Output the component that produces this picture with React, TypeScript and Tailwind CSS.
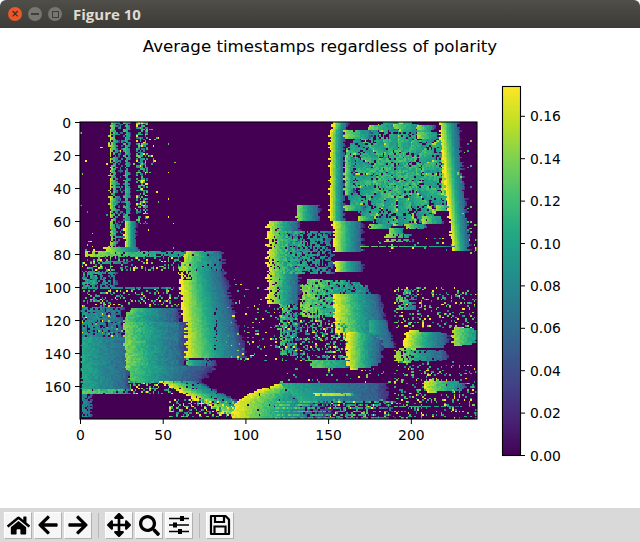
import React, { useMemo } from "react";
import { FaHome, FaArrowLeft, FaArrowRight, FaArrowsAlt, FaSearch } from "react-icons/fa";

const COLS = 240;
const ROWS = 180;

const VIRIDIS = [
  "#440154", "#482475", "#414487", "#355f8d", "#2a788e", "#21918c",
  "#22a884", "#44bf70", "#7ad151", "#bddf26", "#fde725",
];

const hex = (s: string) => [1, 3, 5].map((i) => parseInt(s.slice(i, i + 2), 16));

const viridis = (v: number) => {
  const t = Math.max(0, Math.min(0.9999, v)) * 10;
  const i = Math.floor(t);
  const a = hex(VIRIDIS[i]);
  const b = hex(VIRIDIS[i + 1]);
  const c = a.map((x, k) => Math.round(x + (b[k] - x) * (t - i)));
  return `rgb(${c[0]},${c[1]},${c[2]})`;
};

// small seeded generator so the picture is the same on every load
const makeRand = (seed: number) => () => {
  seed = (seed + 0x6d2b79f5) | 0;
  let t = Math.imul(seed ^ (seed >>> 15), 1 | seed);
  t = (t + Math.imul(t ^ (t >>> 7), 61 | t)) ^ t;
  return ((t ^ (t >>> 14)) >>> 0) / 4294967296;
};

type Band = {
  c0: number;
  c1: number;
  r0: number;
  r1: number;
  c0b?: number; // left edge at the last row
  c1b?: number; // right edge at the last row
  hi?: number;
  lo?: number;
  d?: number;
  n?: number;
  round?: boolean; // bulging ends instead of a square block
};

const buildFrame = () => {
  const rand = makeRand(1907);
  const grid = new Float32Array(COLS * ROWS);
  const put = (c: number, r: number, v: number) => {
    if (c >= 0 && c < COLS && r >= 0 && r < ROWS) grid[r * COLS + c] = v;
  };

  const band = ({ c0, c1, r0, r1, c0b = c0, c1b = c1, hi = 1, lo = 0.26, d = 1, n = 0.03, round = false }: Band) => {
    for (let r = r0; r < r1; r++) {
      const k = r1 - r0 > 1 ? (r - r0) / (r1 - r0 - 1) : 0;
      let l = c0 + (c0b - c0) * k;
      let e = c1 + (c1b - c1) * k;
      const span = e - l;
      if (round) {
        const q = Math.sqrt(Math.max(0, 1 - Math.pow(2 * k - 1, 4)));
        l += span * 0.08 * (1 - q);
        e = l + span * (0.25 + 0.75 * q);
      }
      const jl = (rand() - 0.5) * 1.4;
      const je = (rand() - 0.5) * 3;
      for (let c = Math.round(l + jl); c < Math.round(e + je); c++) {
        if (rand() > d) continue;
        const t = Math.min(1, Math.max(0, (c - l) / Math.max(1, span)));
        let v = lo + (hi - lo) * Math.pow(1 - t, 1.35);
        // the far edge fades out towards the background
        if (t > 0.86) v *= 0.45 + (0.55 * (1 - t)) / 0.14;
        put(c, r, v + (rand() - 0.5) * n * 2);
      }
    }
  };

  const speckle = (c0: number, c1: number, r0: number, r1: number, d: number, lo = 0.45, hi = 0.85, y = 0.18) => {
    for (let r = r0; r < r1; r++)
      for (let c = c0; c < c1; c++)
        if (rand() < d) put(c, r, rand() < y ? 1 : lo + rand() * (hi - lo));
  };

  const clear = (c0: number, c1: number, r0: number, r1: number, d: number) => {
    for (let r = r0; r < r1; r++)
      for (let c = c0; c < c1; c++) if (rand() < d) put(c, r, 0);
  };

  // left poles
  speckle(0, 60, 0, 78, 0.008, 0.45, 0.9, 0.4);
  band({ c0: 18, c1: 23, r0: 0, r1: 76, hi: 0.9, lo: 0.42, d: 0.8, n: 0.08 });
  speckle(23, 27, 0, 76, 0.22, 0.3, 0.55, 0.03);
  band({ c0: 27, c1: 30, r0: 0, r1: 60, hi: 0.68, lo: 0.5, d: 0.95, n: 0.05 });
  band({ c0: 27, c1: 34, r0: 60, r1: 78, hi: 1, lo: 0.28, n: 0.02 });
  speckle(34, 41, 0, 62, 0.55, 0.4, 0.8, 0.15);
  speckle(41, 48, 0, 60, 0.05, 0.45, 0.85, 0.4);

  // long bar that runs across the left half
  band({ c0: 3, c1: 70, r0: 78, r1: 82, hi: 0.88, lo: 0.5, d: 0.85, n: 0.06 });
  band({ c0: 15, c1: 36, r0: 76, r1: 79, hi: 0.95, lo: 0.4, n: 0.03 });
  speckle(1, 64, 82, 90, 0.28);
  band({ c0: 10, c1: 30, r0: 84, r1: 86, hi: 0.7, lo: 0.42, d: 0.9 });

  // middle slanted building
  band({ c0: 64, c1: 86, r0: 78, r1: 92, c0b: 60, c1b: 88, hi: 0.9, lo: 0.34, d: 0.94, n: 0.06 });
  band({ c0: 60, c1: 87, r0: 90, r1: 143, c0b: 63, c1b: 101, hi: 1, lo: 0.28, n: 0.03 });
  clear(60, 68, 90, 96, 0.5);
  band({ c0: 64, c1: 82, r0: 143, r1: 150, hi: 0.72, lo: 0.26, d: 0.96 });
  clear(81, 83, 112, 140, 0.3);
  clear(60, 102, 143, 144, 0.7);

  // left area, teal and blue
  band({ c0: 1, c1: 22, r0: 90, r1: 100, hi: 0.6, lo: 0.48, d: 0.62, n: 0.1 });
  speckle(1, 60, 100, 112, 0.2);
  band({ c0: 1, c1: 62, r0: 100, r1: 101, hi: 0.55, lo: 0.4, d: 0.7 });
  band({ c0: 1, c1: 26, r0: 112, r1: 130, hi: 0.52, lo: 0.38, d: 0.85, n: 0.08 });
  speckle(1, 26, 116, 130, 0.08);
  band({ c0: 1, c1: 30, r0: 130, r1: 162, hi: 0.6, lo: 0.34, d: 1, n: 0.05 });
  band({ c0: 1, c1: 30, r0: 162, r1: 165, hi: 0.75, lo: 0.62, d: 0.95, n: 0.08 });
  band({ c0: 1, c1: 7, r0: 165, r1: 179, hi: 0.5, lo: 0.3, d: 0.85, n: 0.06 });

  // the blob in the lower left
  band({ c0: 30, c1: 60, r0: 113, r1: 121, c0b: 26, hi: 0.76, lo: 0.3, n: 0.05 });
  band({ c0: 26, c1: 64, r0: 121, r1: 150, c0b: 28, hi: 0.82, lo: 0.32, n: 0.06 });
  band({ c0: 30, c1: 82, r0: 148, r1: 158, c1b: 74, hi: 0.74, lo: 0.22, n: 0.04 });
  speckle(30, 56, 157, 165, 0.34);

  // sweep down to the bottom
  for (let i = 0; i < 21; i++) {
    const c = 56 + i * 2;
    band({ c0: c - 8, c1: c + 16, r0: 157 + i, r1: 158 + i, hi: 1, lo: 0.4, d: 0.94, n: 0.05 });
  }
  speckle(54, 94, 168, 179, 0.3);
  speckle(88, 113, 95, 145, 0.035);
  speckle(100, 113, 120, 145, 0.07);

  // curved floor at the bottom
  for (let r = 159; r < 180; r++) {
    const k = (r - 159) / 20;
    const l = 92 + 25 * Math.pow(1 - k, 3);
    band({ c0: l, c1: 152, r0: r, r1: r + 1, hi: 1, lo: 0.26, d: 0.98, n: 0.04 });
  }

  // the tall block in the centre
  band({ c0: 113, c1: 133, r0: 60, r1: 110, hi: 1, lo: 0.3, d: 1, n: 0.05 });
  clear(113, 121, 64, 120, 0.14);
  band({ c0: 131, c1: 145, r0: 50, r1: 60, hi: 0.85, lo: 0.28 });
  band({ c0: 121, c1: 153, r0: 66, r1: 92, hi: 0.68, lo: 0.48, d: 0.72, n: 0.08 });
  clear(124, 153, 66, 88, 0.08);
  band({ c0: 121, c1: 132, r0: 110, r1: 142, hi: 0.7, lo: 0.48, d: 0.72, n: 0.1 });
  speckle(113, 132, 110, 145, 0.12);
  band({ c0: 153, c1: 171, r0: 60, r1: 79, hi: 1, lo: 0.28 });
  band({ c0: 154, c1: 171, r0: 84, r1: 91, hi: 1, lo: 0.28 });

  // tall pole on the left of the round pattern
  band({ c0: 153, c1: 162, r0: 0, r1: 8, c0b: 151, c1b: 160, hi: 1, lo: 0.28 });
  band({ c0: 151, c1: 160, r0: 8, r1: 60, hi: 1, lo: 0.28 });

  // round pattern, slightly wider than tall
  const cx = 191.5;
  const cy = 31;
  for (let r = 0; r < 67; r++) {
    for (let c = 160; c < 226; c++) {
      const dx = (c - cx) / 1.08;
      const dy = r - cy;
      const rad = Math.sqrt(dx * dx + dy * dy);
      if (rad > 32) continue;
      const a = ((Math.atan2(dy, dx) + Math.PI) / (2 * Math.PI)) * 16;
      const frac = a % 1;
      let v = 0;
      if (rad < 13) v = rand() < 0.94 ? 0.52 + rand() * 0.22 : 0;
      else if (rad < 15) v = rand() < 0.7 ? 0.55 + rand() * 0.25 : 0;
      else if (rad < 24) {
        v = frac < 0.08 && rand() < 0.6 ? (rand() < 0.5 ? 0.92 : 0) : 0.5 + 0.2 * (1 - frac) + (rand() - 0.5) * 0.12;
        if (rad > 22.5 && rand() < 0.25) v = 0;
      } else if (rad < 25.5) v = rand() < 0.6 ? 0.6 : 0;
      else {
        const edge = rand() < 0.6;
        v = frac < 0.1 && edge ? 0 : frac < 0.2 && edge ? 0.88 : 0.45 + 0.25 * (1 - frac) + (rand() - 0.5) * 0.1;
        if (rand() < 0.08) v = 0;
      }
      put(c, r, v);
    }
  }

  // petals round the pattern
  const petals = [
    [174, 190, 2, 5], [189, 205, 1, 4], [204, 214, 2, 5], [160, 176, 5, 10], [204, 217, 6, 10],
    [160, 172, 50, 54], [215, 226, 50, 54], [168, 178, 57, 60], [207, 219, 57, 62],
    [175, 189, 62, 65], [197, 209, 62, 65], [187, 196, 64, 68], [160, 165, 20, 44], [219, 224, 18, 44],
  ];
  petals.forEach(([c0, c1, r0, r1]) =>
    band({ c0, c1, r0, r1, hi: 0.86, lo: 0.46, d: 0.97, n: 0.05 }),
  );

  // pole on the right, it leans outwards
  band({ c0: 217, c1: 229, r0: 0, r1: 78, c0b: 225, c1b: 236, hi: 1, lo: 0.28, n: 0.02 });
  speckle(234, 240, 60, 80, 0.18);
  speckle(228, 237, 10, 60, 0.03);

  // horizontal lines under the pattern
  band({ c0: 184, c1: 200, r0: 68, r1: 70, hi: 0.9, lo: 0.55, d: 0.85 });
  band({ c0: 184, c1: 202, r0: 71, r1: 73, hi: 0.9, lo: 0.55, d: 0.75 });
  band({ c0: 170, c1: 226, r0: 75, r1: 76, hi: 0.8, lo: 0.55, d: 0.8 });
  speckle(170, 226, 70, 79, 0.05);

  // lower right of the centre
  band({ c0: 134, c1: 176, r0: 95, r1: 119, c0b: 133, hi: 0.8, lo: 0.45, d: 0.88, n: 0.1, round: true });
  band({ c0: 153, c1: 182, r0: 104, r1: 128, c0b: 154, c1b: 186, hi: 1, lo: 0.3, n: 0.05 });
  band({ c0: 175, c1: 186, r0: 120, r1: 137, c1b: 190, hi: 0.62, lo: 0.3 });
  speckle(133, 162, 119, 145, 0.34, 0.45, 0.8, 0.15);
  band({ c0: 161, c1: 183, r0: 127, r1: 150, hi: 1, lo: 0.28, n: 0.04, round: true });
  band({ c0: 140, c1: 162, r0: 144, r1: 149, hi: 0.75, lo: 0.55, n: 0.06 });
  speckle(121, 190, 149, 160, 0.08);

  // right side
  speckle(190, 240, 100, 125, 0.17);
  band({ c0: 192, c1: 203, r0: 101, r1: 114, hi: 0.8, lo: 0.4, d: 0.6, n: 0.1 });
  band({ c0: 197, c1: 223, r0: 126, r1: 138, c0b: 195, hi: 1, lo: 0.28, n: 0.04, round: true });
  band({ c0: 225, c1: 241, r0: 124, r1: 136, hi: 0.9, lo: 0.5, n: 0.05, round: true });
  band({ c0: 190, c1: 223, r0: 137, r1: 146, hi: 0.9, lo: 0.28, d: 0.9, n: 0.05, round: true });
  speckle(190, 240, 145, 180, 0.17);
  band({ c0: 208, c1: 233, r0: 156, r1: 164, hi: 0.95, lo: 0.42, d: 0.97, n: 0.06, round: true });

  // streaks along the bottom
  band({ c0: 121, c1: 186, r0: 158, r1: 169, c0b: 132, hi: 0.62, lo: 0.28, n: 0.04 });
  band({ c0: 141, c1: 166, r0: 164, r1: 166, hi: 0.98, lo: 0.8, d: 0.85, n: 0.04 });
  for (let r = 169; r < 180; r += 2) {
    band({ c0: 118, c1: 190, r0: r, r1: r + 1, hi: 0.72, lo: 0.5, d: 0.76, n: 0.1 });
  }
  clear(136, 190, 170, 179, 0.22);
  speckle(150, 190, 168, 179, 0.2);
  band({ c0: 190, c1: 228, r0: 172, r1: 173, hi: 0.7, lo: 0.55, d: 0.8 });

  // collapse every row to runs of one colour, it saves a lot of nodes
  const runs: { x: number; y: number; w: number; f: string }[] = [];
  for (let r = 0; r < ROWS; r++) {
    let start = 0;
    let prev = -1;
    for (let c = 0; c <= COLS; c++) {
      const v = c < COLS ? Math.round(Math.max(0, grid[r * COLS + c]) * 40) : -2;
      if (v !== prev) {
        if (prev > 0) runs.push({ x: start, y: r, w: c - start, f: viridis(prev / 40) });
        start = c;
        prev = v;
      }
    }
  }
  return runs;
};

const xTicks = [0, 50, 100, 150, 200];
const yTicks = [0, 20, 40, 60, 80, 100, 120, 140, 160];
const barTicks = ["0.00", "0.02", "0.04", "0.06", "0.08", "0.10", "0.12", "0.14", "0.16"];

const Chart = () => {
  const runs = useMemo(buildFrame, []);
  const px = (c: number) => 80.5 + c * (397 / 240);
  const py = (r: number) => 122.5 + r * (297 / 180);

  return (
    <svg width={640} height={444} viewBox="0 64 640 444" className="block text-[13.9px] font-['DejaVu_Sans',sans-serif] fill-black">
      <defs>
        <linearGradient id="viridis" x1="0" y1="1" x2="0" y2="0">
          {VIRIDIS.map((c, i) => (
            <stop key={c} offset={i / 10} stopColor={c} />
          ))}
        </linearGradient>
      </defs>

      <rect x={80} y={122} width={397} height={297} fill="#440154" />
      <svg x={80} y={122} width={397} height={297} viewBox="0 0 240 180" preserveAspectRatio="none" shapeRendering="crispEdges">
        {runs.map((b, i) => (
          <rect key={i} x={b.x} y={b.y} width={b.w} height={1} fill={b.f} />
        ))}
      </svg>
      <rect x={80} y={122} width={397} height={297} fill="none" stroke="#000" strokeWidth={1.1} />

      {yTicks.map((t) => (
        <g key={t}>
          <line x1={75} x2={80} y1={py(t)} y2={py(t)} stroke="#000" />
          <text x={71} y={py(t) + 5} textAnchor="end">{t}</text>
        </g>
      ))}
      {xTicks.map((t) => (
        <g key={t}>
          <line x1={px(t)} x2={px(t)} y1={419} y2={424} stroke="#000" />
          <text x={px(t)} y={440} textAnchor="middle">{t}</text>
        </g>
      ))}

      <rect x={502.5} y={86.5} width={18} height={369} fill="url(#viridis)" stroke="#000" strokeWidth={1.1} />
      {barTicks.map((t, i) => (
        <g key={t}>
          <line x1={520} x2={525} y1={455.5 - i * 42.4} y2={455.5 - i * 42.4} stroke="#000" />
          <text x={530} y={460.5 - i * 42.4}>{t}</text>
        </g>
      ))}
    </svg>
  );
};

const SlidersIcon = () => (
  <svg width={22} height={20} viewBox="0 0 22 20">
    <path d="M1 3.5h20M1 10h20M1 16.500h20" stroke="#000" strokeWidth={1.6} />
    <path d="M12 1h4v5h-4zM5 7.500h4v5H5zM10 14h4v5h-4z" fill="#000" />
  </svg>
);

const SaveIcon = () => (
  <svg width={22} height={22} viewBox="0 0 22 22" fill="none" stroke="#000" strokeWidth={2.2}>
    <path d="M2 2h14.500L20 5.500V20H2z" strokeLinejoin="round" />
    <path d="M6 2v6h9V2M5.500 20v-7.500h11V20" />
  </svg>
);

const ToolButton = ({ children }: { children: React.ReactNode }) => (
  <button className="w-7 h-[27px] flex items-center justify-center bg-[#f6f6f6] border-t border-l border-white border-r border-b border-r-[#b0b0b0] border-b-[#b0b0b0] text-black">
    {children}
  </button>
);

const Separator = () => <div className="w-px h-[25px] bg-[#b8b8b8] mx-[2px]" />;

export default function App() {
  return (
    <div className="w-[640px] h-[542px] flex flex-col overflow-hidden bg-white">
      <header className="h-7 flex items-center gap-[3px] pl-2 rounded-t-[6px] bg-gradient-to-b from-[#4f4e48] to-[#3c3b37] shrink-0">
        <span className="w-[14px] h-[14px] rounded-full flex items-center justify-center bg-[#e9572b] text-[#4a2a1c] text-[10px] leading-none font-bold font-['DejaVu_Sans',sans-serif]">×</span>
        <span className="w-[14px] h-[14px] ml-[3px] rounded-full flex items-center justify-center bg-[#77766f]">
          <span className="w-2 h-[2px] bg-[#3f3e3a]" />
        </span>
        <span className="w-[14px] h-[14px] ml-[3px] rounded-full flex items-center justify-center bg-[#77766f]">
          <span className="w-[7px] h-[7px] border border-[#3f3e3a]" />
        </span>
        <span className="ml-[8px] text-[15px] font-bold text-[#dfdbd2] font-['Open_Sans',sans-serif]">Figure 10</span>
      </header>

      <main className="flex-1 bg-white">
        <h1 className="h-9 pt-[9px] text-center text-[16.67px] leading-5 text-black font-['DejaVu_Sans',sans-serif]">
          Average timestamps regardless of polarity
        </h1>
        <Chart />
      </main>

      <footer className="h-[34px] shrink-0 flex items-center gap-[2px] pl-[4px] bg-[#d9d9d9]">
        <ToolButton><FaHome size={23} /></ToolButton>
        <ToolButton><FaArrowLeft size={22} /></ToolButton>
        <ToolButton><FaArrowRight size={22} /></ToolButton>
        <div className="w-[9px] flex justify-center"><Separator /></div>
        <ToolButton><FaArrowsAlt size={24} /></ToolButton>
        <ToolButton><FaSearch size={21} /></ToolButton>
        <ToolButton><SlidersIcon /></ToolButton>
        <div className="w-[9px] flex justify-center"><Separator /></div>
        <ToolButton><SaveIcon /></ToolButton>
      </footer>
    </div>
  );
}
